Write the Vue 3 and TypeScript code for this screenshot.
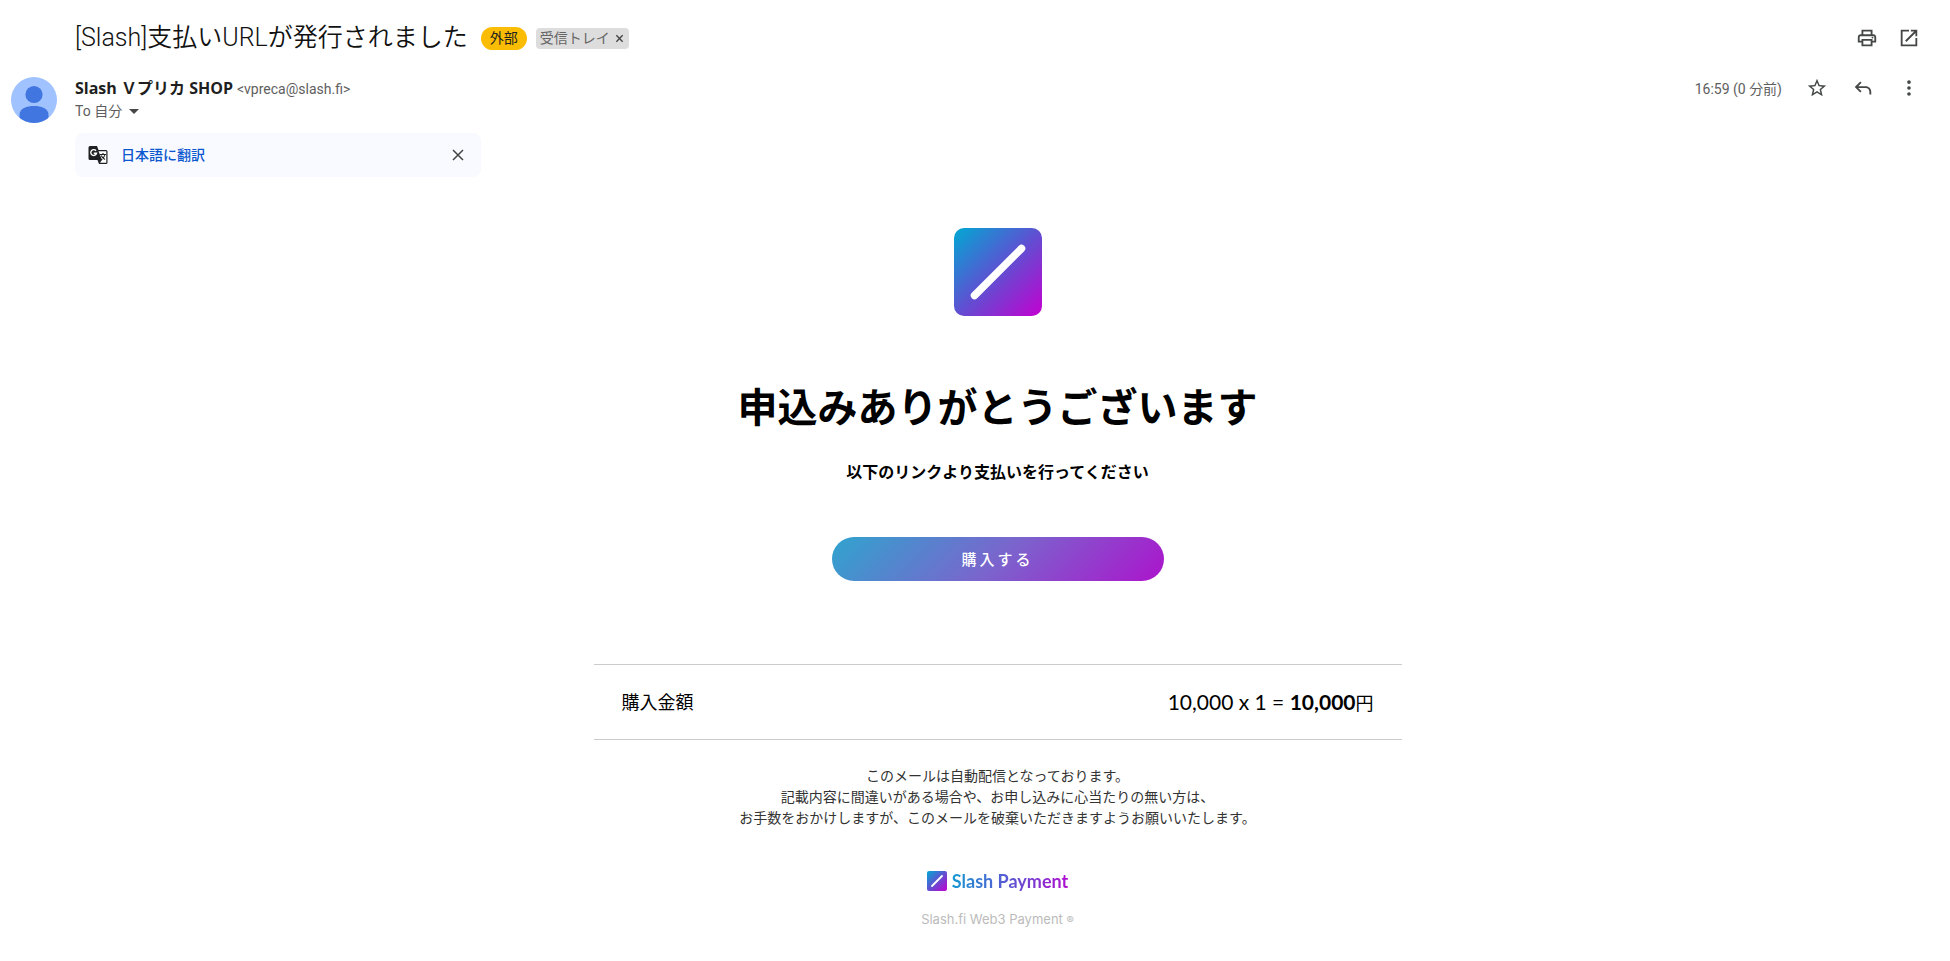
<script setup lang="ts">
interface Order { label: string; unit: string; quantity: number; total: string }

const order: Order = { label: '購入金額', unit: '10,000', quantity: 1, total: '10,000' }
const notes: string[] = [
  'このメールは自動配信となっております。',
  '記載内容に間違いがある場合や、お申し込みに心当たりの無い方は、',
  'お手数をおかけしますが、このメールを破棄いただきますようお願いいたします。',
]
</script>

<template>
  <main class="mail">
    <header class="subject">
      <h1>[Slash]支払いURLが発行されました</h1>
      <span class="external">外部</span>
      <span class="label">受信トレイ
        <button type="button" aria-label="ラベルを削除">
          <svg viewBox="0 0 10 10" width="9" height="9"><path d="M1.5 1.5l7 7M8.5 1.5l-7 7" /></svg>
        </button>
      </span>
      <div class="tools">
        <button type="button" class="icon" aria-label="印刷">
          <svg viewBox="0 0 24 24"><path d="M19 8h-1V3H6v5H5c-1.66 0-3 1.34-3 3v6h4v4h12v-4h4v-6c0-1.66-1.34-3-3-3zM8 5h8v3H8V5zm8 14H8v-4h8v4zm2-4v-2H6v2H4v-4c0-.55.45-1 1-1h14c.55 0 1 .45 1 1v4h-2z" /><circle cx="18" cy="11.5" r="1" /></svg>
        </button>
        <button type="button" class="icon" aria-label="新しいウィンドウで開く">
          <svg viewBox="0 0 24 24"><path d="M19 19H5V5h7V3H3v18h18v-9h-2v7zM14 3v2h3.59l-9.83 9.83 1.41 1.41L19 6.41V10h2V3h-7z" /></svg>
        </button>
      </div>
    </header>

    <section class="sender">
      <svg class="avatar" viewBox="0 0 46 46" aria-hidden="true">
        <defs><clipPath id="avatar-clip"><circle cx="23" cy="23" r="23" /></clipPath></defs>
        <circle cx="23" cy="23" r="23" fill="#a0c2ff" />
        <g clip-path="url(#avatar-clip)" fill="#4175df">
          <circle cx="23" cy="17.5" r="8.6" />
          <path d="M8.5 38C8.5 31 16 29 23 29s14.500 2 14.500 9v8h-29z" />
        </g>
      </svg>
      <div class="details">
        <p class="from"><strong>Slash Ｖプリカ SHOP</strong> <span>&lt;vpreca@slash.fi&gt;</span></p>
        <button type="button" class="to">To 自分
          <svg viewBox="0 0 10 5" width="10" height="5"><path d="M0 0h10L5 5z" /></svg>
        </button>
      </div>
      <div class="tools">
        <time>16:59 (0 分前)</time>
        <button type="button" class="icon" aria-label="スター">
          <svg viewBox="0 0 24 24"><path d="M22 9.24l-7.19-.62L12 2 9.19 8.63 2 9.24l5.46 4.73L5.82 21 12 17.27 18.18 21l-1.63-7.03L22 9.24zM12 15.4l-3.76 2.27 1-4.28-3.32-2.88 4.38-.38L12 6.1l1.71 4.04 4.38.38-3.32 2.88 1 4.28L12 15.4z" /></svg>
        </button>
        <button type="button" class="icon" aria-label="返信">
          <svg viewBox="0 0 24 24"><path d="M6.8 10l3.6-3.6L9 5 3 11l6 6 1.4-1.4L6.8 12H15c2.2 0 4 1.8 4 4v3h2v-3c0-3.3-2.7-6-6-6z" /></svg>
        </button>
        <button type="button" class="icon" aria-label="その他">
          <svg viewBox="0 0 24 24"><circle cx="12" cy="5.5" r="2" /><circle cx="12" cy="12" r="2" /><circle cx="12" cy="18.5" r="2" /></svg>
        </button>
      </div>
    </section>

    <aside class="translate">
      <svg class="glyph" viewBox="0 0 20 20" aria-hidden="true">
        <path d="M2 1h7l1.5 4H18a1.5 1.5 0 0 1 1.5 1.5v11A1.5 1.5 0 0 1 18 19h-7l-1.5-4H2A1.5 1.5 0 0 1 .5 13.5v-11A1.5 1.5 0 0 1 2 1z" fill="#202124" />
        <path d="M10.5 6.2h7.8v11.6H12l2-3z" fill="#fff" />
        <path d="M8 5.8A2.9 2.9 0 1 0 8.5 8.3H5.8" fill="none" stroke="#fff" stroke-width="1.4" />
        <path d="M12 9.5h6M15 8v1.5M17 9.500c-.5 2.500-2 4-4 5.500M13.300 10.500c.5 1.500 2 3 3.700 4" fill="none" stroke="#202124" stroke-width="1.1" />
      </svg>
      <a href="#translate">日本語に翻訳</a>
      <button type="button" aria-label="閉じる">
        <svg viewBox="0 0 12 12" width="12" height="12"><path d="M1 1l10 10M11 1L1 11" /></svg>
      </button>
    </aside>

    <div class="content">
      <article class="body">
        <svg class="logo" viewBox="0 0 88 88" role="img" aria-label="Slash">
          <defs>
            <linearGradient id="brand" x1="0" y1="0" x2="1" y2="1">
              <stop offset="0" stop-color="#00a9d3" /><stop offset=".5" stop-color="#5f50d2" /><stop offset="1" stop-color="#c300d0" />
            </linearGradient>
          </defs>
          <rect width="88" height="88" rx="10" fill="url(#brand)" />
          <path d="M20.5 67.5l47-47" stroke="#fff" stroke-width="7.5" stroke-linecap="round" />
        </svg>
        <h2>申込みありがとうございます</h2>
        <p class="lead">以下のリンクより支払いを行ってください</p>
        <a class="buy" href="#pay">購入する</a>
        <dl class="amount">
          <dt>{{ order.label }}</dt>
          <dd>{{ order.unit }} x {{ order.quantity }} = <b>{{ order.total }}</b><span>円</span></dd>
        </dl>
        <p class="notes"><span v-for="line in notes" :key="line">{{ line }}</span></p>
        <div class="brand">
          <svg viewBox="0 0 88 88" aria-hidden="true">
            <rect width="88" height="88" rx="9" fill="url(#brand)" />
            <path d="M22 66l44-44" stroke="#fff" stroke-width="8" stroke-linecap="round" />
          </svg>
          <span>Slash Payment</span>
        </div>
        <p class="copyright">Slash.fi Web3 Payment <small>®</small></p>
      </article>
    </div>
  </main>
</template>

<style>
body { margin: 0; background: #fff; }
</style>

<style scoped>
.mail { padding: 16px 30px 24px 11px; color: #1f1f1f; font-family: Roboto, "Noto Sans CJK JP", sans-serif; }
h1, h2, p, dl, dd { margin: 0; }
button { border: 0; padding: 0; background: none; font: inherit; color: inherit; cursor: pointer; }
svg { flex: none; display: block; }
.subject { display: flex; align-items: center; height: 44px; padding-left: 64px; }
h1 { color: #111; font-size: 25px; font-weight: 300; font-family: Roboto, "Noto Sans CJK JP DemiLight", "Noto Sans CJK JP", sans-serif; line-height: 44px; white-space: nowrap; }
.external { margin-left: 13px; padding: 0 9px; border-radius: 12px; background: #fbbc04; font-size: 14px; line-height: 23px; }
.label { display: flex; align-items: center; gap: 5px; margin-left: 9px; padding: 0 5px 0 4px; border-radius: 4px; background: #ddd; color: #666; font-size: 14px; line-height: 21px; }
.label path, .translate button path { fill: none; stroke: #444; stroke-width: 1.5; }
.tools { display: flex; align-items: center; margin-left: auto; }
.icon svg { width: 22px; height: 22px; fill: #444746; }
.subject .tools { gap: 20px; }
.sender { display: flex; align-items: center; height: 46px; margin-top: 17px; }
.avatar { width: 46px; height: 46px; }
.details { align-self: flex-start; padding-left: 18px; }
.from { font-size: 16px; line-height: 22px; white-space: nowrap; }
.from span { color: #5e5e5e; font-size: 14px; }
.from strong { font-family: "Open Sans", "Noto Sans CJK JP", sans-serif; font-weight: 700; }
.to { display: flex; align-items: center; gap: 7px; color: #5e5e5e; font-size: 14px; line-height: 22px; }
.to svg { fill: #444746; }
.sender .tools { align-self: flex-start; gap: 24px; height: 22px; }
time { color: #5e5e5e; font-size: 14px; }
.translate { box-sizing: border-box; display: flex; align-items: center; width: 406px; height: 44px; margin: 10px 0 0 64px; padding: 0 17px 0 13px; border-radius: 8px; background: #f8faff; }
.glyph { width: 20px; height: 20px; }
.translate a { margin-left: 13px; color: #0b57d0; font-size: 14px; font-weight: 500; line-height: 20px; text-decoration: none; }
.translate button { margin-left: auto; }
.content { margin: 51px 0 0 64px; }
.body { display: flex; flex-direction: column; align-items: center; box-sizing: border-box; max-width: 808px; margin: 0 auto; color: #000; font-family: Lato, "Noto Sans CJK JP", sans-serif; }
.logo { width: 88px; height: 88px; }
h2 { margin-top: 59px; font-size: 40px; line-height: 64px; }
.lead { margin-top: 21px; font-size: 16px; font-weight: 700; line-height: 24px; }
.buy { box-sizing: border-box; width: 332px; margin-top: 53px; border-radius: 22px; background: linear-gradient(135deg, #2fa4ce, #7a65cd 50%, #ac14cc); color: #fff; font-size: 15px; font-weight: 500; line-height: 44px; letter-spacing: 3px; text-align: center; text-decoration: none; }
.amount { display: flex; justify-content: space-between; box-sizing: border-box; width: 100%; margin-top: 83px; padding: 0 28px; border: solid #ccc; border-width: 1px 0; font-size: 18px; line-height: 74px; }
dd { font-size: 21px; }
dd span { font-size: 18px; line-height: 1; }
.notes { margin-top: 25px; color: #333; font-size: 14px; line-height: 21px; text-align: center; }
.notes span { display: block; }
.brand { display: flex; align-items: center; gap: 5px; margin-top: 42px; }
.brand svg { width: 20px; height: 20px; }
.brand span { background: linear-gradient(100deg, #159bd3, #5c55d2 50%, #b10bcf); background-clip: text; color: transparent; font-size: 18px; font-weight: 700; line-height: 22px; }
.copyright { margin-top: 16px; color: #bbb; font-family: Inter, sans-serif; font-size: 13px; line-height: 22px; }
small { font-size: 11px; }
</style>
